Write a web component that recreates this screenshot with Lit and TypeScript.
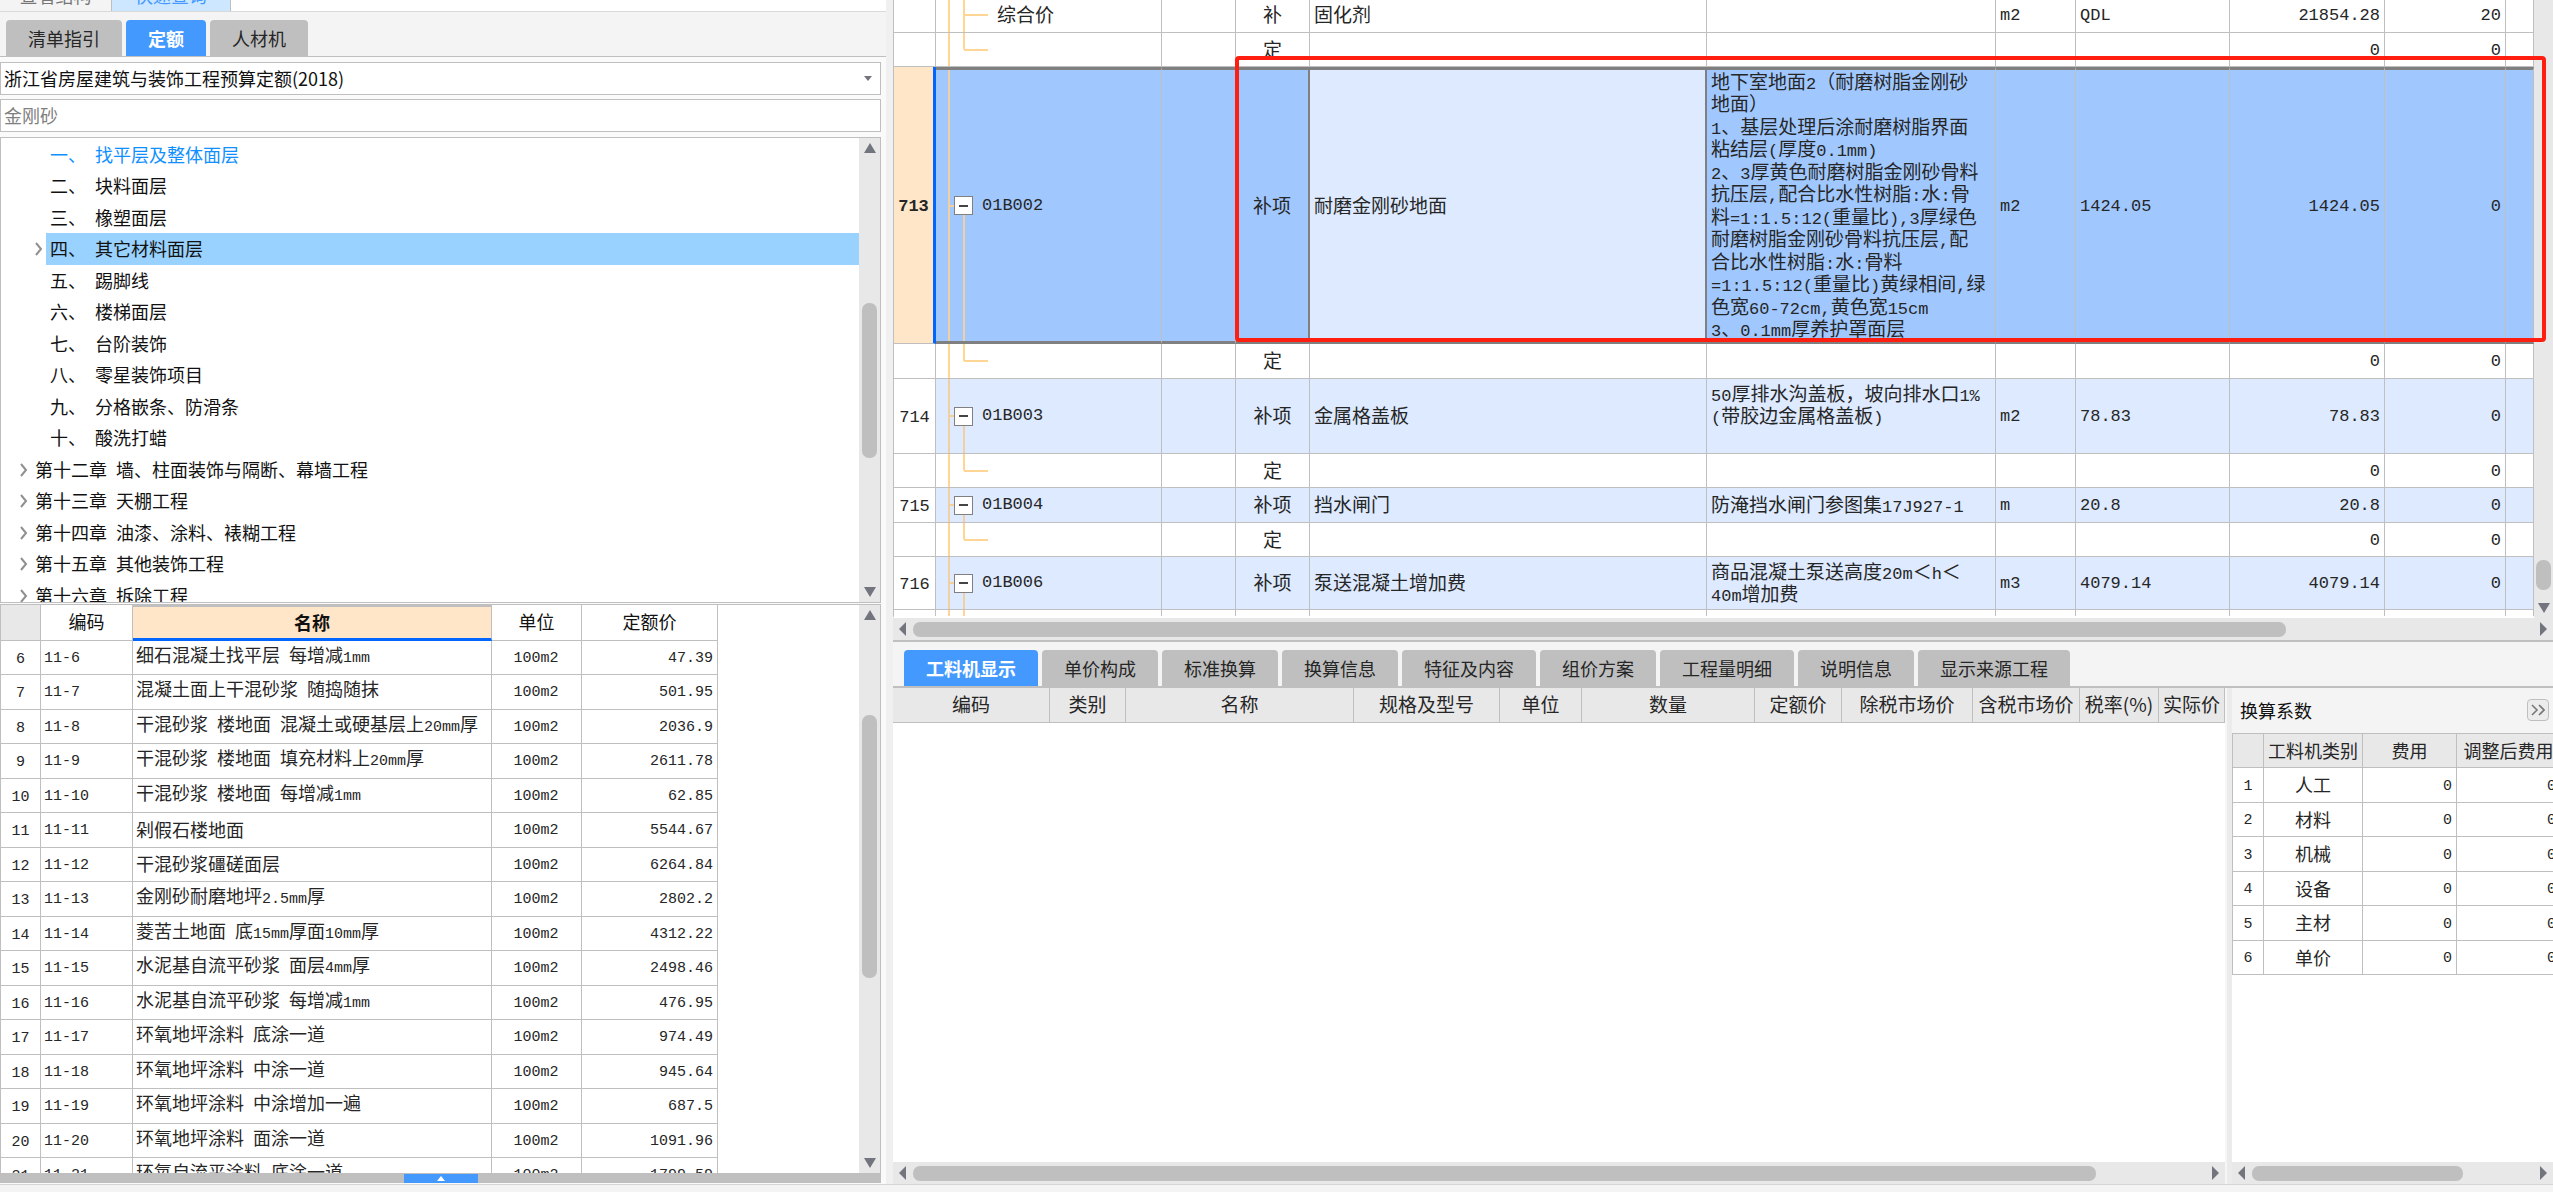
import { LitElement, html, css, svg, TemplateResult } from "lit";
import { customElement } from "lit/decorators.js";
import { classMap } from "lit/directives/class-map.js";
import { styleMap } from "lit/directives/style-map.js";

/** Wraps each run of Latin letters and digits so it is set in the half-width face. */
const mix = (text: string) =>
  text.split(/([\x21-\x7e][\x20-\x7e]*| +)/).map((part) =>
    /^[\x20-\x7e]+$/.test(part) ? html`<span class="n">${part}</span>` : part
  );

const arrows: Record<string, string> = {
  up: "0,10 6,0 12,10",
  down: "0,0 6,10 12,0",
  left: "8,0 8,14 1,7",
  right: "2,0 2,14 9,7",
};
const arrow = (dir: string) => {
  const vertical = dir === "up" || dir === "down";
  return html`<svg class="arrow" width=${vertical ? 12 : 10} height=${vertical ? 10 : 14} aria-hidden="true">
    ${svg`<polygon points=${arrows[dir]} fill="#73757e"/>`}
  </svg>`;
};

/** A scroll bar; before, size and after are the parts of its track. */
const bar = (kind: "v" | "h", before: number, size: number, after: number, first = true) => html`
  <div class="bar ${kind}">
    ${first
      ? html`<button class="step" aria-label=${kind === "v" ? "向上" : "向左"}>${arrow(kind === "v" ? "up" : "left")}</button>`
      : ""}
    <span style=${styleMap({ flexGrow: String(before) })}></span>
    <span class="thumb" style=${styleMap({ flexGrow: String(size) })}></span>
    <span style=${styleMap({ flexGrow: String(after) })}></span>
    <button class="step" aria-label=${kind === "v" ? "向下" : "向右"}>${arrow(kind === "v" ? "down" : "right")}</button>
  </div>
`;

const shared = css`
  :host {
    font-family: "Noto Sans CJK SC", sans-serif;
    font-size: 18px;
    line-height: 22px;
    color: #262626;
    box-sizing: border-box;
  }
  *, *::before, *::after { box-sizing: border-box; }
  .n {
    font-family: "Liberation Mono", "Noto Sans CJK SC", monospace;
    font-size: 15px;
    white-space: pre;
  }
  button {
    font: inherit;
    color: inherit;
    padding: 0;
    margin: 0;
    border: 0;
    background: none;
  }
  table {
    border-collapse: separate;
    border-spacing: 0;
    table-layout: fixed;
    width: 100%;
  }
  th, td {
    padding: 0 4px 2px;
    border-right: 1px solid #bfbfbf;
    border-bottom: 1px solid #bfbfbf;
    font-weight: 400;
    text-align: left;
    white-space: nowrap;
    overflow: hidden;
  }
  .c { text-align: center; }
  .r { text-align: right; }
  .bar {
    display: flex;
    flex: none;
    align-items: center;
    background: #e8e8e8;
  }
  .bar.v { flex-direction: column; width: 21px; }
  .bar.h { height: 22px; }
  .bar span { flex: 0 1 0px; }
  .thumb { background: #bfbfbf; border-radius: 7px; }
  .v .thumb { width: 15px; }
  .h .thumb { height: 15px; }
  .step {
    display: flex;
    flex: none;
    align-items: center;
    justify-content: center;
    width: 20px;
    height: 20px;
  }
  .tabs {
    display: flex;
    gap: 4px;
    background: #f4f4f4;
    border-bottom: 1px solid #bfbfbf;
  }
  .tab {
    height: 36px;
    padding: 0 22px 1px;
    border-radius: 4px 4px 0 0;
    background: #bfbfbf;
  }
  .tab.on { background: #4499ff; color: #fff; font-weight: 700; }
`;

/* ---------- left panel ---------- */

interface Node { text: string; level: 1 | 2; open?: boolean; link?: boolean; on?: boolean; }

const nodes: Node[] = [
  { text: "一、 找平层及整体面层", level: 2, link: true },
  { text: "二、 块料面层", level: 2 },
  { text: "三、 橡塑面层", level: 2 },
  { text: "四、 其它材料面层", level: 2, open: true, on: true },
  { text: "五、 踢脚线", level: 2 },
  { text: "六、 楼梯面层", level: 2 },
  { text: "七、 台阶装饰", level: 2 },
  { text: "八、 零星装饰项目", level: 2 },
  { text: "九、 分格嵌条、防滑条", level: 2 },
  { text: "十、 酸洗打蜡", level: 2 },
  { text: "第十二章 墙、柱面装饰与隔断、幕墙工程", level: 1, open: true },
  { text: "第十三章 天棚工程", level: 1, open: true },
  { text: "第十四章 油漆、涂料、裱糊工程", level: 1, open: true },
  { text: "第十五章 其他装饰工程", level: 1, open: true },
  { text: "第十六章 拆除工程", level: 1, open: true },
];

const quotas: [string, string][] = [
  ["细石混凝土找平层 每增减1mm", "47.39"],
  ["混凝土面上干混砂浆 随捣随抹", "501.95"],
  ["干混砂浆 楼地面 混凝土或硬基层上20mm厚", "2036.9"],
  ["干混砂浆 楼地面 填充材料上20mm厚", "2611.78"],
  ["干混砂浆 楼地面 每增减1mm", "62.85"],
  ["剁假石楼地面", "5544.67"],
  ["干混砂浆礓磋面层", "6264.84"],
  ["金刚砂耐磨地坪2.5mm厚", "2802.2"],
  ["菱苦土地面 底15mm厚面10mm厚", "4312.22"],
  ["水泥基自流平砂浆 面层4mm厚", "2498.46"],
  ["水泥基自流平砂浆 每增减1mm", "476.95"],
  ["环氧地坪涂料 底涂一道", "974.49"],
  ["环氧地坪涂料 中涂一道", "945.64"],
  ["环氧地坪涂料 中涂增加一遍", "687.5"],
  ["环氧地坪涂料 面涂一道", "1091.96"],
  ["环氧自流平涂料 底涂一道", "1799.59"],
];

@customElement("quota-panel")
class QuotaPanel extends LitElement {
  static styles = [shared, css`
    :host { display: flex; flex-direction: column; min-height: 0; padding-right: 5px; background: #fafafa; }
    .strip {
      display: flex;
      flex: none;
      height: 12px;
      margin-right: -5px;
      overflow: hidden;
      background: #fff;
      border-bottom: 1px solid #d9d9d9;
    }
    .strip button {
      display: flex;
      align-items: flex-end;
      justify-content: center;
      width: 112px;
      height: 11px;
      padding-bottom: 5px;
      background: #f4f4f4;
      border-right: 1px solid #bfbfbf;
      color: #777;
    }
    .strip .on { width: 119px; background: #cce7ff; color: #4499ff; }
    .strip span { margin-bottom: 0; }
    .tabs { flex: none; margin-right: -5px; padding: 8px 0 0 6px; }
    label { display: flex; flex: none; position: relative; }
    .field {
      width: 100%;
      height: 33px;
      padding: 0 3px 2px;
      border: 1px solid #bfbfbf;
      border-radius: 0;
      background: #fff;
      font: inherit;
      color: #262626;
      outline: none;
      appearance: none;
    }
    .lib { margin-top: 5px; }
    .lib .field { color: #111; }
    .find { margin-top: 4px; }
    .field::placeholder { color: #808080; opacity: 1; }
    .lib svg { position: absolute; right: 9px; top: 14px; }
    .tree {
      display: flex;
      flex: 465 1 0px;
      min-height: 0;
      margin-top: 5px;
      border: 1px solid #bfbfbf;
      background: #fff;
    }
    ul {
      flex: 1;
      min-width: 0;
      margin: 0;
      padding: 1px 0 0;
      list-style: none;
      overflow: hidden;
      color: #111;
    }
    li { display: flex; height: 31px; padding-left: 16px; line-height: 30px; white-space: nowrap; }
    li:nth-child(even) { height: 32px; }
    li.l2 { padding-left: 31px; }
    .twist { display: flex; flex: none; align-items: center; justify-content: center; width: 14px; }
    .name { flex: 1; padding-left: 4px; }
    .link { color: #1090ff; }
    .on .name { background: #99d1ff; }
    .list {
      display: flex;
      flex: 570 1 0px;
      min-height: 0;
      margin-top: 1px;
      border: 1px solid #bfbfbf;
      border-bottom: 0;
      background: #fff;
      overflow: hidden;
    }
    .rows { flex: 1; min-width: 0; overflow: hidden; }
    .quota { width: 717px; }
    .quota tr { height: 34px; }
    .quota tbody tr:nth-child(even) { height: 35px; }
    .quota thead tr { height: 36px; }
    .quota td { padding-left: 3px; }
    .quota .no { padding: 0; text-align: center; }
    .quota th { text-align: center; color: #111; }
    .quota .corner { background: #e8e8e8; }
    .quota .key {
      padding: 0;
      background: #ffe6c8;
      border-top: 2px solid #bfbfbf;
      border-bottom: 3px solid #0066ff;
      font-weight: 700;
    }
    .fold {
      display: flex;
      flex: none;
      justify-content: center;
      height: 10px;
      padding-top: 1px;
      margin-bottom: 1px;
      background: #bfbfbf;
    }
    .fold button { display: flex; align-items: center; justify-content: center; width: 74px; background: #4499ff; }
  `];

  render() {
    return html`
      <div class="strip"><button>查看结构</button><button class="on">快速查询</button></div>
      <nav class="tabs">
        <button class="tab">清单指引</button><button class="tab on">定额</button><button class="tab">人材机</button>
      </nav>
      <label class="lib">
        <select class="field" aria-label="定额库">
          <option>浙江省房屋建筑与装饰工程预算定额(2018)</option>
        </select>
        <svg width="8" height="5" aria-hidden="true"><polygon points="0,0 8,0 4,5" fill="#73757e"/></svg>
      </label>
      <label class="find"><input class="field" type="text" placeholder="金刚砂" aria-label="查找定额"></label>
      <div class="tree">
        <ul>
          ${nodes.map((n) => html`
            <li class=${classMap({ l2: n.level === 2, on: !!n.on })}>
              <button class="twist" aria-label="展开" ?disabled=${!n.open}>
                ${n.open
                  ? html`<svg width="8" height="14" aria-hidden="true">
                      <path d="M1 1 L6 7 L1 13" fill="none" stroke="#909090" stroke-width="2"/></svg>`
                  : ""}
              </button>
              <span class=${classMap({ name: true, link: !!n.link })}>${mix(n.text)}</span>
            </li>`)}
        </ul>
        ${bar("v", 144, 154, 123)}
      </div>
      <div class="list">
        <div class="rows">
          <table class="quota">
            <colgroup>
              <col style="width:40px"><col style="width:92px"><col style="width:359px">
              <col style="width:90px"><col style="width:136px">
            </colgroup>
            <thead>
              <tr><th class="corner"></th><th>编码</th><th class="key">名称</th><th>单位</th><th>定额价</th></tr>
            </thead>
            <tbody>
              ${quotas.map(([name, price], i) => html`
                <tr>
                  <td class="no">${mix(String(i + 6))}</td>
                  <td>${mix(`11-${i + 6}`)}</td>
                  <td>${mix(name)}</td>
                  <td class="c">${mix("100m2")}</td>
                  <td class="r">${mix(price)}</td>
                </tr>`)}
            </tbody>
          </table>
        </div>
        ${bar("v", 90, 262, 175)}
      </div>
      <div class="fold">
        <button aria-label="展开面板">
          <svg width="8" height="5" aria-hidden="true"><polygon points="0,5 8,5 4,0" fill="#fff"/></svg>
        </button>
      </div>
    `;
  }
}

/* ---------- bill of quantities ---------- */

interface Row {
  h: string; no?: string; code?: string; kind: string; name?: string; desc?: string[];
  unit?: string; expr?: string; qty: string; rate: string; child?: boolean; mid?: boolean; on?: boolean;
}

const bill: Row[] = [
  { h: "h35", code: "综合价", kind: "补", name: "固化剂", unit: "m2", expr: "QDL", qty: "21854.28", rate: "20", child: true, mid: true },
  { h: "h34", kind: "定", qty: "0", rate: "0", child: true },
  {
    h: "h277", no: "713", code: "01B002", kind: "补项", name: "耐磨金刚砂地面",
    desc: [
      "地下室地面2（耐磨树脂金刚砂",
      "地面）",
      "1、基层处理后涂耐磨树脂界面",
      "粘结层(厚度0.1mm)",
      "2、3厚黄色耐磨树脂金刚砂骨料",
      "抗压层,配合比水性树脂:水:骨",
      "料=1:1.5:12(重量比),3厚绿色",
      "耐磨树脂金刚砂骨料抗压层,配",
      "合比水性树脂:水:骨料",
      "=1:1.5:12(重量比)黄绿相间,绿",
      "色宽60-72cm,黄色宽15cm",
      "3、0.1mm厚养护罩面层",
    ],
    unit: "m2", expr: "1424.05", qty: "1424.05", rate: "0", on: true,
  },
  { h: "h35", kind: "定", qty: "0", rate: "0", child: true },
  {
    h: "h75", no: "714", code: "01B003", kind: "补项", name: "金属格盖板",
    desc: ["50厚排水沟盖板，坡向排水口1%", "(带胶边金属格盖板)", ""],
    unit: "m2", expr: "78.83", qty: "78.83", rate: "0",
  },
  { h: "h34", kind: "定", qty: "0", rate: "0", child: true },
  {
    h: "h35", no: "715", code: "01B004", kind: "补项", name: "挡水闸门",
    desc: ["防淹挡水闸门参图集17J927-1"], unit: "m", expr: "20.8", qty: "20.8", rate: "0",
  },
  { h: "h34", kind: "定", qty: "0", rate: "0", child: true },
  {
    h: "h53", no: "716", code: "01B006", kind: "补项", name: "泵送混凝土增加费",
    desc: ["商品混凝土泵送高度20m＜h＜", "40m增加费"],
    unit: "m3", expr: "4079.14", qty: "4079.14", rate: "0",
  },
];

@customElement("bill-grid")
class BillGrid extends LitElement {
  static styles = [shared, css`
    :host { display: flex; flex-direction: column; min-width: 0; min-height: 0; position: relative; font-size: 19px; }
    .n { font-size: 17px; }
    .body { display: flex; flex: 1; min-height: 0; }
    .view { flex: 1; min-width: 0; overflow: hidden; background: #fff; border-left: 1px solid #bfbfbf; border-bottom: 2px solid #fff; }
    table { margin-top: -2px; }
    .bar.v { width: 19px; }
    .h34 { height: 34px; }
    .h35 { height: 35px; }
    .h53 { height: 53px; }
    .h75 { height: 75px; }
    .h277 { height: 277px; }
    .no { padding: 0; text-align: center; }
    .item td { background-color: #ddeaff; }
    .item .no { background-color: #fff; }
    .item.on td { background-color: #a0c8ff; border-top: 3px solid #808080; border-bottom: 3px solid #808080; }
    .item.on .no {
      background-color: #ffe6c8;
      border-top: 0;
      border-bottom: 1px solid #bfbfbf;
      border-right: 3px solid #0066ff;
      font-weight: 700;
    }
    .item.on .title { background-color: #ddeaff; border-right: 2px solid #808080; }
    .item.on .kind { border-right: 2px solid #808080; }
    .code { padding: 0; background-repeat: no-repeat; }
    .child .code {
      background-image: linear-gradient(#ffd596, #ffd596), linear-gradient(#ffd596, #ffd596), linear-gradient(#ffd596, #ffd596);
      background-size: 2px 100%, 2px 50%, 24px 2px;
      background-position: 12px 0, 27px 0, 28px 50%;
    }
    .child.mid .code { background-size: 2px 100%, 2px 100%, 24px 2px; }
    .item .code {
      background-image: linear-gradient(#f2cf9e, #f2cf9e), linear-gradient(#f2cf9e, #f2cf9e), linear-gradient(#f2cf9e, #f2cf9e);
      background-size: 2px 100%, 2px 50%, 6px 2px;
      background-position: 12px 0, 27px 100%, 12px 50%;
    }
    .rest td { height: 8px; border-bottom: 0; }
    .rest .code { background-size: 2px 100%, 2px 100%, 0 0; }
    .leaf { display: block; padding: 0 0 2px 61px; }
    .node { display: flex; align-items: center; gap: 9px; padding-left: 18px; }
    .fold {
      display: flex;
      align-items: center;
      justify-content: center;
      width: 19px;
      height: 19px;
      background: #fff;
      border: 1px solid #808080;
    }
    .desc { padding-bottom: 0; }
    .line { display: block; height: 22px; line-height: 19px; }
    .line:nth-child(even) { height: 23px; }
    .mark {
      position: absolute;
      left: 342px;
      right: 7px;
      top: 56px;
      height: 286px;
      border: 4px solid #ff1e10;
      border-radius: 4px;
      pointer-events: none;
    }
  `];

  private row(r: Row): TemplateResult {
    const cls = { [r.h]: true, child: !!r.child, mid: !!r.mid, item: !r.child, on: !!r.on };
    return html`
      <tr class=${classMap(cls)}>
        <td class="no">${mix(r.no ?? "")}</td>
        <td class="code">${r.child
          ? html`<span class="leaf">${r.code ?? ""}</span>`
          : html`<span class="node"><button class="fold" aria-label="折叠">
              <svg width="9" height="2" aria-hidden="true"><rect width="9" height="2" fill="#444"/></svg>
            </button>${mix(r.code ?? "")}</span>`}</td>
        <td></td>
        <td class="c kind">${r.kind}</td>
        <td class="title">${mix(r.name ?? "")}</td>
        <td class="desc">${(r.desc ?? []).map((d) => html`<span class="line">${mix(d)}</span>`)}</td>
        <td>${mix(r.unit ?? "")}</td>
        <td>${mix(r.expr ?? "")}</td>
        <td class="r">${mix(r.qty)}</td>
        <td class="r">${mix(r.rate)}</td>
        <td></td>
      </tr>`;
  }

  render() {
    return html`
      <div class="body">
        <div class="view">
          <table>
            <colgroup>
              <col style="width:42px"><col style="width:226px"><col style="width:74px"><col style="width:74px">
              <col><col style="width:289px"><col style="width:80px"><col style="width:154px">
              <col style="width:155px"><col style="width:121px"><col style="width:28px">
            </colgroup>
            <tbody>
              ${bill.map((r) => this.row(r))}
              <tr class="child rest">
                <td></td><td class="code"></td><td></td><td></td><td></td><td></td>
                <td></td><td></td><td></td><td></td><td></td>
              </tr>
            </tbody>
          </table>
        </div>
        ${bar("v", 560, 30, 8, false)}
      </div>
      ${bar("h", 0, 1370, 247)}
      <div class="mark"></div>
    `;
  }
}

/* ---------- resources and coefficients ---------- */

const detailTabs = ["工料机显示", "单价构成", "标准换算", "换算信息", "特征及内容", "组价方案", "工程量明细", "说明信息", "显示来源工程"];
const resourceCols: [string, string][] = [
  ["编码", "157px"], ["类别", "76px"], ["名称", "auto"], ["规格及型号", "146px"], ["单位", "82px"], ["数量", "173px"],
  ["定额价", "87px"], ["除税市场价", "131px"], ["含税市场价", "107px"], ["税率(%)", "79px"], ["实际价", "66px"],
];
const factors = ["人工", "材料", "机械", "设备", "主材", "单价"];

@customElement("detail-panel")
class DetailPanel extends LitElement {
  static styles = [shared, css`
    :host { display: flex; flex-direction: column; min-width: 0; min-height: 0; border-top: 2px solid #bfbfbf; background: #fff; }
    .tabs { flex: none; padding: 8px 0 0 11px; border-bottom-width: 2px; }
    .panes { display: grid; flex: 1; min-height: 0; grid-template-columns: minmax(0, 1332fr) 7px minmax(0, 321fr); }
    .pane { display: flex; flex-direction: column; min-width: 0; min-height: 0; overflow: hidden; }
    .fill { flex: 1; min-height: 0; overflow: hidden; }
    .split { background: #ebebeb; border-left: 2px solid #f6f6f6; }
    th { background: #e8e8e8; text-align: center; padding: 0 0 2px; }
    .resources { font-size: 19px; }
    .resources tr { height: 35px; }
    .head {
      display: flex;
      flex: none;
      align-items: center;
      justify-content: space-between;
      height: 45px;
      padding: 0 4px 2px 8px;
      background: #f4f4f4;
      color: #111;
    }
    h2 { margin: 0; font-size: 18px; font-weight: 400; }
    .more {
      display: flex;
      align-items: center;
      justify-content: center;
      width: 22px;
      height: 22px;
      border: 1px solid #bfbfbf;
      border-radius: 4px;
      background: #ececec;
    }
    .factors { width: 329px; border-top: 1px solid #bfbfbf; border-left: 1px solid #bfbfbf; }
    .factors tr { height: 34px; }
    .factors tbody tr:nth-child(odd) { height: 35px; }
    .factors .no { padding: 0 0 2px; }
  `];

  render() {
    return html`
      <nav class="tabs">
        ${detailTabs.map((t, i) => html`<button class=${classMap({ tab: true, on: i === 0 })}>${t}</button>`)}
      </nav>
      <div class="panes">
        <section class="pane">
          <div class="fill">
            <table class="resources">
              <colgroup>${resourceCols.map(([, width]) => html`<col style=${styleMap({ width })}>`)}</colgroup>
              <thead><tr>${resourceCols.map(([t]) => html`<th>${t}</th>`)}</tr></thead>
            </table>
          </div>
          ${bar("h", 0, 1182, 109)}
        </section>
        <div class="split"></div>
        <section class="pane">
          <div class="head">
            <h2>换算系数</h2>
            <button class="more" aria-label="收起">
              <svg width="14" height="12" aria-hidden="true">
                <path d="M1 1 L6 6 L1 11 M8 1 L13 6 L8 11" fill="none" stroke="#777" stroke-width="1.6"/>
              </svg>
            </button>
          </div>
          <div class="fill">
            <table class="factors">
              <colgroup>
                <col style="width:31px"><col style="width:99px"><col style="width:94px"><col style="width:104px">
              </colgroup>
              <thead><tr><th></th><th>工料机类别</th><th>费用</th><th>调整后费用</th></tr></thead>
              <tbody>
                ${factors.map((f, i) => html`
                  <tr>
                    <td class="c no">${mix(String(i + 1))}</td>
                    <td class="c">${f}</td>
                    <td class="r">${mix("0")}</td>
                    <td class="r">${mix("0")}</td>
                  </tr>`)}
              </tbody>
            </table>
          </div>
          ${bar("h", 0, 209, 70)}
        </section>
      </div>
    `;
  }
}

@customElement("app-root")
class AppRoot extends LitElement {
  static styles = css`
    :host {
      display: grid;
      grid-template-columns: minmax(0, 886fr) 7px minmax(0, 1660fr);
      grid-template-rows: minmax(0, 640fr) minmax(0, 544fr) 8px;
      height: 100vh;
      overflow: hidden;
      background: #fff;
    }
    quota-panel { grid-row: 1 / 3; grid-column: 1; }
    .split { grid-row: 1 / 3; grid-column: 2; background: #f0f0f0; }
    bill-grid { grid-row: 1; grid-column: 3; }
    detail-panel { grid-row: 2; grid-column: 3; }
    footer { grid-row: 3; grid-column: 1 / 4; background: #f4f4f4; border-top: 1px solid #d5d5d5; }
  `;

  render() {
    return html`
      <quota-panel></quota-panel>
      <div class="split"></div>
      <bill-grid></bill-grid>
      <detail-panel></detail-panel>
      <footer></footer>
    `;
  }
}
